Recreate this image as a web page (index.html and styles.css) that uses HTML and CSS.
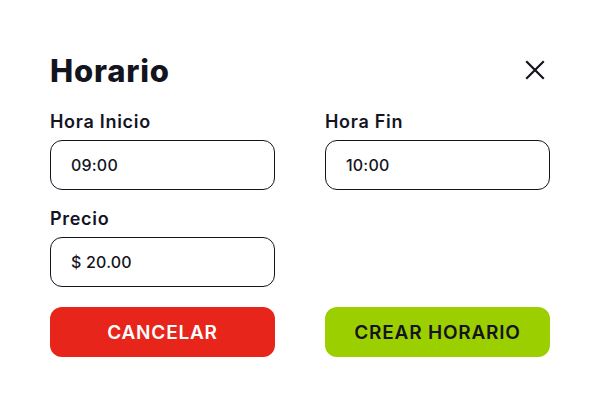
FILE: index.html
```html
<!DOCTYPE html>
<html lang="es">
<head>
<meta charset="utf-8">
<link rel="stylesheet" href="styles.css">
</head>
<body>
<div class="modal">
  <div class="header">
    <h1 class="title">Horario</h1>
    <button class="close" aria-label="Cerrar">
      <svg width="20" height="20" viewBox="0 0 20 20"><path d="M2 2 L18 18 M18 2 L2 18" stroke="#14141f" stroke-width="2.2" stroke-linecap="square" fill="none"/></svg>
    </button>
  </div>
  <div class="grid">
    <div class="field">
      <label class="label">Hora Inicio</label>
      <div class="input">09:00</div>
    </div>
    <div class="field">
      <label class="label">Hora Fin</label>
      <div class="input">10:00</div>
    </div>
    <div class="field">
      <label class="label">Precio</label>
      <div class="input">$ 20.00</div>
    </div>
    <div class="field"></div>
    <button class="btn cancel">CANCELAR</button>
    <button class="btn create">CREAR HORARIO</button>
  </div>
</div>
</body>
</html>
```
FILE: styles.css
```css
* { box-sizing: border-box; }
body {
  margin: 0;
  background: #fff;
  font-family: "Inter", "Lato", sans-serif;
  color: #14141f;
}
.modal {
  width: 600px;
  padding: 50px 50px 0 50px;
}
.header {
  display: flex;
  justify-content: space-between;
  align-items: center;
  height: 40px;
}
.title {
  margin: 0;
  font-size: 31px;
  font-weight: 800;
  letter-spacing: 0.8px;
}
.close {
  border: 0;
  background: none;
  padding: 0;
  width: 20px;
  height: 20px;
  margin-right: 5px;
  display: flex;
}
.grid {
  margin-top: 20px;
  display: grid;
  grid-template-columns: 225px 225px;
  column-gap: 50px;
  row-gap: 17px;
}
.field {
  display: flex;
  flex-direction: column;
  gap: 6px;
}
.label {
  font-size: 18px;
  font-weight: 600;
  line-height: 24px;
  letter-spacing: 0.7px;
}
.input {
  height: 50px;
  border: 1px solid #14141f;
  border-radius: 12px;
  padding: 0 20px;
  display: flex;
  align-items: center;
  font-size: 16px;
  font-weight: 500;
  letter-spacing: 0.2px;
}
.btn {
  height: 50px;
  border: 0;
  border-radius: 12px;
  font-family: inherit;
  font-size: 19px;
  font-weight: 600;
  letter-spacing: 0.8px;
  margin-top: 3px;
}
.cancel { background: #e8251a; color: #fff; }
.create { background: #9ccf00; color: #14141f; }
```
